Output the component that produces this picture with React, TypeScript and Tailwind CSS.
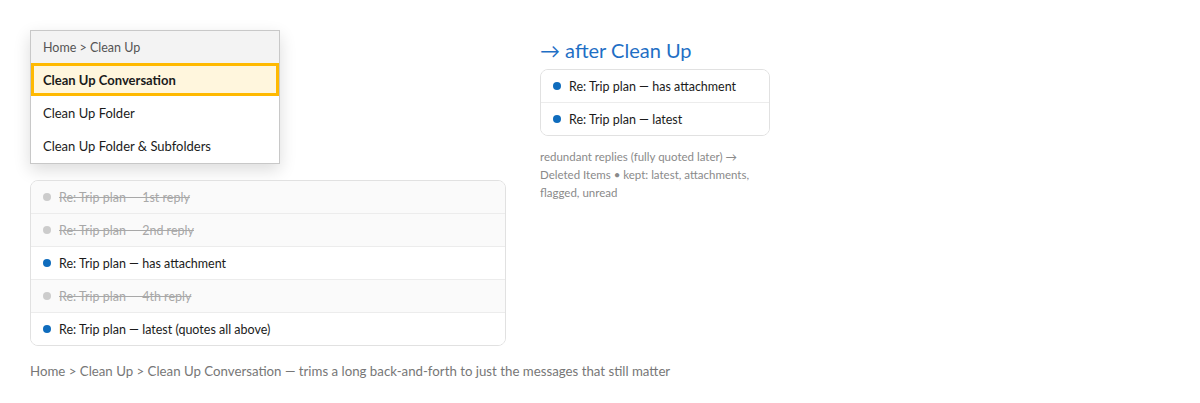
import React from 'react'

type Msg = { label: string; removed?: boolean }

const thread: Msg[] = [
  { label: 'Re: Trip plan — 1st reply', removed: true },
  { label: 'Re: Trip plan — 2nd reply', removed: true },
  { label: 'Re: Trip plan — has attachment' },
  { label: 'Re: Trip plan — 4th reply', removed: true },
  { label: 'Re: Trip plan — latest (quotes all above)' },
]

const kept = ['Re: Trip plan — has attachment', 'Re: Trip plan — latest']

function Row({ label, removed }: Msg) {
  return (
    <div
      className={
        'flex h-[33px] items-center gap-[8px] border-b border-[#ececec] px-[12px] last:h-[32px] last:border-b-0 ' +
        (removed ? 'bg-[#fafafa] text-[#a8a8a8] line-through' : 'bg-white text-[#1b1b1b]')
      }
    >
      <span
        className={'h-[8px] w-[8px] shrink-0 rounded-full ' + (removed ? 'bg-[#cccccc]' : 'bg-[#0f6cbd]')}
      />
      <span className="pt-[2px] text-[12.5px]">{label}</span>
    </div>
  )
}

export default function App() {
  return (
    <div
      className="min-h-[403px] bg-white px-[30px] pt-[30px] text-[#1b1b1b]"
      style={{ fontFamily: 'Lato, "Noto Sans", sans-serif' }}
    >
      <div className="flex gap-[34px]">
        <div className="w-[476px]">
          <div className="w-[250px] border border-[#c8c8c8] bg-white shadow-[0_6px_16px_rgba(0,0,0,0.14)]">
            <div className="flex h-[32px] items-center bg-[#f3f3f3] px-[12px] pt-[2px] text-[12.5px] text-[#555]">
              Home &gt; Clean Up
            </div>
            <div className="flex h-[33px] items-center border-[3px] border-[#ffb900] bg-[#fff6dd] px-[9px] pt-[2px] text-[13px] font-bold">
              Clean Up Conversation
            </div>
            <div className="flex h-[33px] items-center px-[12px] pt-[2px] text-[13px]">Clean Up Folder</div>
            <div className="flex h-[34px] items-center px-[12px] pt-[2px] text-[13px]">Clean Up Folder &amp; Subfolders</div>
          </div>

          <div className="mt-[16px] overflow-hidden rounded-[8px] border border-[#e1e1e1]">
            {thread.map((m) => (
              <Row key={m.label} {...m} />
            ))}
          </div>
        </div>

        <div className="w-[230px] pt-[5px]">
          <div className="text-[20px] leading-[30px] text-[#1f6fc5]">→ after Clean Up</div>
          <div className="mt-[4px] overflow-hidden rounded-[8px] border border-[#e1e1e1]">
            {kept.map((k) => (
              <Row key={k} label={k} />
            ))}
          </div>
          <p className="mt-[12px] w-[230px] text-[11.5px] leading-[18px] text-[#8a8a8a]">
            redundant replies (fully quoted later) → Deleted Items • kept: latest, attachments, flagged, unread
          </p>
        </div>
      </div>

      <div className="mt-[16px] text-[13.25px] text-[#777]">
        Home &gt; Clean Up &gt; Clean Up Conversation — trims a long back-and-forth to just the messages that still matter
      </div>
    </div>
  )
}
